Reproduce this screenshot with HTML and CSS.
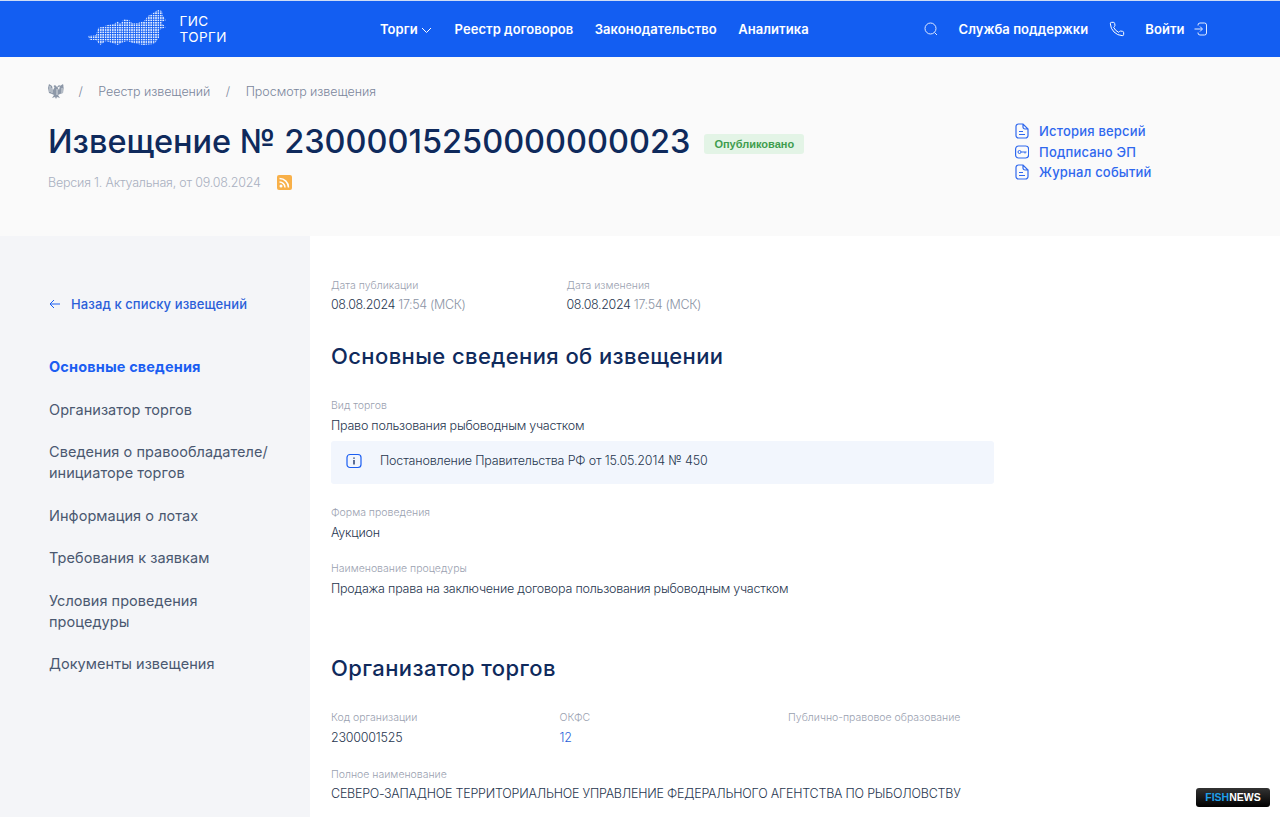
FILE: index.html
```html
<!DOCTYPE html>
<html lang="ru">
<head>
<meta charset="utf-8">
<title>Извещение</title>
<link rel="stylesheet" href="styles.css">
</head>
<body>
<header class="topbar">
  <div class="logo">
    <svg class="logo-map" width="78" height="38" viewBox="0 0 78 38">
      <defs><pattern id="dots" width="2.4" height="2.4" patternUnits="userSpaceOnUse"><rect width="1.600" height="1.600" fill="#e3ecff"/></pattern></defs>
      <path d="M0 26L8 25L10 18L20 15L26 14L30 11L32 14L36 9L41 10L44 13L50 13L56 11L60 6L70 0L74 1L75 6L78 10L73 13L78 17L71 20L71 28L66 34L55 35L45 33L39 31L33 33L30 35L24 33L18 31L12 35L8 30L2 30Z" fill="url(#dots)"/>
    </svg>
    <span class="logo-text">ГИС<br>ТОРГИ</span>
  </div>
  <nav class="mainnav">
    <a class="nav-first">Торги <svg width="11" height="7" viewBox="0 0 11 7"><path d="M1 1l4.500 4.500L10 1" fill="none" stroke="#fff"/></svg></a>
    <a>Реестр договоров</a><a>Законодательство</a><a>Аналитика</a>
  </nav>
  <div class="tools">
    <svg width="14" height="14" viewBox="0 0 14 14"><circle cx="6.500" cy="6.500" r="5.500" fill="none" stroke="#dfe9ff"/><path d="M10.500 10.500l2.500 2.500" stroke="#dfe9ff"/></svg>
    <a>Служба поддержки</a>
    <svg width="16" height="16" viewBox="0 0 24 24"><path d="M22 17.500v2.500a2 2 0 0 1-2.200 2A19 19 0 0 1 2 4.200 2 2 0 0 1 4 2h2.500a2 2 0 0 1 2 1.700l.4 2.600a2 2 0 0 1-.6 1.800L7 9.500a15 15 0 0 0 7.500 7.500l1.400-1.300a2 2 0 0 1 1.800-.6l2.600.4a2 2 0 0 1 1.700 2z" fill="none" stroke="#fff" stroke-width="1.500"/></svg>
    <a class="login">Войти</a>
    <svg width="13" height="14" viewBox="0 0 13 14"><path d="M4 3.500V3a2 2 0 0 1 2-2h4.500a2 2 0 0 1 2 2v8a2 2 0 0 1-2 2H6a2 2 0 0 1-2-2v-.5M.5 7h7.500M6 4.500L8.500 7 6 9.500" fill="none" stroke="#e3ecff"/></svg>
  </div>
</header>
<section class="head">
  <div class="head-main">
    <div class="crumbs">
      <svg class="eagle" width="18" height="17" viewBox="0 0 18 17"><path d="M9 4L7 2 5.500 3l1 1.500L5 7 4 3 1 1 0 5l1 5 3 1 2 1-2 3 3-1 1 2 1-2 3 1-2-3 2-1 3-1 1-5-1-4-3 2-1 4-1.500-2.500L12.500 3 11 2z" fill="#8d98a8"/><path d="M2 3v6M4 5v5M16 3v6M14 5v5M9 6v6" stroke="#fafafa" stroke-width=".7"/></svg>
      <span>/</span><span>Реестр извещений</span><span>/</span><span>Просмотр извещения</span>
    </div>
    <div class="title-row"><h1>Извещение № 23000015250000000023</h1><span class="badge">Опубликовано</span></div>
    <div class="version"><span>Версия 1. Актуальная, от 09.08.2024</span><svg width="15" height="15" viewBox="0 0 15 15"><rect width="15" height="15" rx="2" fill="#f8b049"/><circle cx="4" cy="11" r="1.500" fill="#fff"/><path d="M2.500 7a5.500 5.500 0 0 1 5.500 5.500M2.500 3.500a9 9 0 0 1 9 9" fill="none" stroke="#fff" stroke-width="1.500"/></svg></div>
  </div>
  <ul class="head-links">
    <li><svg width="14" height="16" viewBox="0 0 14 16"><path d="M1 3.500A2.500 2.500 0 0 1 3.500 1H8l5 5v6.500a2.500 2.500 0 0 1-2.500 2.500h-7A2.500 2.500 0 0 1 1 12.500zM8 1v3a2 2 0 0 0 2 2h3M4 8.500h4M4 11.500h6" fill="none" stroke="#2f68ee" stroke-width="1.200"/></svg>История версий</li>
    <li><svg width="14" height="14" viewBox="0 0 14 14"><rect x=".6" y="1" width="13" height="12" rx="3" fill="none" stroke="#2f68ee" stroke-width="1.200"/><circle cx="4.500" cy="7" r="1.500" fill="none" stroke="#2f68ee"/><path d="M6 7h5.500M10 7v1.500" stroke="#2f68ee"/></svg>Подписано ЭП</li>
    <li><svg width="14" height="16" viewBox="0 0 14 16"><path d="M1 3.500A2.500 2.500 0 0 1 3.500 1H8l5 5v6.500a2.500 2.500 0 0 1-2.500 2.500h-7A2.500 2.500 0 0 1 1 12.500zM8 1v3a2 2 0 0 0 2 2h3M4 8.500h4M4 11.500h6" fill="none" stroke="#2f68ee" stroke-width="1.200"/></svg>Журнал событий</li>
  </ul>
</section>
<div class="body">
  <aside class="side">
    <a class="back"><svg width="12" height="10" viewBox="0 0 12 10"><path d="M11 5H1M5 1L1 5l4 4" fill="none" stroke="#1b5ef2"/></svg>Назад к списку извещений</a>
    <ul class="sidenav">
      <li class="on">Основные сведения</li><li>Организатор торгов</li><li>Сведения о правообладателе/ инициаторе торгов</li><li>Информация о лотах</li><li>Требования к заявкам</li><li>Условия проведения процедуры</li><li>Документы извещения</li>
    </ul>
  </aside>
  <main class="content">
    <div class="row dates">
      <div class="f"><label>Дата публикации</label><p>08.08.2024 <i>17:54 (МСК)</i></p></div>
      <div class="f"><label>Дата изменения</label><p>08.08.2024 <i>17:54 (МСК)</i></p></div>
    </div>
    <h2>Основные сведения об извещении</h2>
    <div class="f"><label>Вид торгов</label><p>Право пользования рыбоводным участком</p></div>
    <div class="note"><svg width="16" height="16" viewBox="0 0 16 16"><rect x="1" y="1.500" width="14" height="13" rx="3" fill="none" stroke="#1b5ef2" stroke-width="1.200"/><path d="M8 7v4.500M8 4.500v1.300" stroke="#10295c" stroke-width="1.300"/></svg>Постановление Правительства РФ от 15.05.2014 № 450</div>
    <div class="f g1"><label>Форма проведения</label><p>Аукцион</p></div>
    <div class="f g2"><label>Наименование процедуры</label><p>Продажа права на заключение договора пользования рыбоводным участком</p></div>
    <h2 class="h-org">Организатор торгов</h2>
    <div class="row org">
      <div class="f"><label>Код организации</label><p>2300001525</p></div>
      <div class="f"><label>ОКФС</label><p class="link">12</p></div>
      <div class="f"><label>Публично-правовое образование</label></div>
    </div>
    <div class="f g3"><label>Полное наименование</label><p>СЕВЕРО-ЗАПАДНОЕ ТЕРРИТОРИАЛЬНОЕ УПРАВЛЕНИЕ ФЕДЕРАЛЬНОГО АГЕНТСТВА ПО РЫБОЛОВСТВУ</p></div>
  </main>
</div>
<div class="fishnews"><b>FISH</b>NEWS</div>
</body>
</html>
```
FILE: styles.css
```css
html,body{margin:0;padding:0}
body{width:1280px;height:817px;overflow:hidden;position:relative;font-family:Inter,"Open Sans",sans-serif;color:#0f2a5c;background:#fff}
.topbar{height:57px;box-sizing:border-box;border-top:1px solid #cfdcf5;background:#135ef2;display:flex;align-items:center;color:#fff;font-weight:600;font-size:13px;letter-spacing:.05px}
.logo{display:flex;align-items:center;margin-left:88px;width:292px;gap:13.500px}
.logo-text{font-size:13.500px;line-height:16px;font-weight:400;letter-spacing:.4px}
.mainnav{display:flex;gap:21.500px;width:544px;white-space:nowrap}
.nav-first{margin-right:1px}
.tools{display:flex;align-items:center;gap:20.500px}
.login{margin-right:-11px}
.head{height:179px;background:#fafafa;display:flex;box-sizing:border-box;padding:24px 0 0 48px}
.head-main{width:967px}
.crumbs{display:flex;gap:15.500px;color:#7a869c;font-size:12.500px;font-weight:300;letter-spacing:-.05px;height:20px;align-items:center}
.eagle{margin-right:-3px}
.title-row{display:flex;align-items:center;gap:14px;margin-top:19px}
h1{margin:0;font-size:32.500px;font-weight:500;line-height:44px;color:#0f2a5c;white-space:nowrap}
.badge{background:#e3f4e6;color:#3f9d4f;font-size:11px;font-weight:700;padding:4px 10px;border-radius:3px;margin-top:3px;font-family:"Liberation Sans",sans-serif}
.version{display:flex;align-items:center;gap:16px;margin-top:11px;color:#a9b0c0;font-size:12.500px;font-weight:300;letter-spacing:-.2px}
.head-links{list-style:none;margin:40px 0 0;padding:0;color:#2f68ee;font-size:13px;font-weight:500;letter-spacing:.2px}
.head-links li{display:flex;align-items:center;gap:10px;height:20.500px}
.body{display:flex}
.side{width:310px;height:581px;background:#f4f5f8;box-sizing:border-box;padding:58px 0 0 49px}
.back{display:flex;align-items:center;gap:10px;color:#2b5fd9;font-size:13px;font-weight:500;letter-spacing:.1px;height:20px}
.sidenav{list-style:none;margin:42px 0 0;padding:0;color:#4a5870;font-size:14.500px;font-weight:400;letter-spacing:.05px}
.sidenav li{line-height:21px;margin-bottom:21.500px;width:228px}
.sidenav .on{color:#1b5ef2;font-weight:700;letter-spacing:.15px}
.content{padding:41px 0 0 21px;width:700px}
.f label{display:block;font-size:10.500px;font-weight:300;color:#9aa1b0;line-height:18px}
.f p{margin:2px 0 0;font-size:12.500px;font-weight:300;letter-spacing:-.22px;line-height:18px;color:#27364f;white-space:nowrap}
.f p i{font-style:normal;color:#8b94a5}
.f .link{color:#2b5fd9}
.row{display:flex}
.dates .f{width:235.500px}
.dates .f p{letter-spacing:-.35px;margin-top:1px}
.org .f{width:228.500px}
h2{margin:27px 0 26px;font-size:22px;letter-spacing:.4px;line-height:30px;font-weight:500;color:#0f2a5c}
.note{width:663px;height:43px;margin-top:6px;background:#f2f6fd;border-radius:3px;display:flex;align-items:center;gap:18px;padding:0 0 4px 15px;box-sizing:border-box;font-size:12.500px;font-weight:300;letter-spacing:-.16px;color:#27364f}
.g1{margin-top:20px}
.g2{margin-top:18px}
.g3{margin-top:19px}
.g3 p{margin-top:1px}
.h-org{margin:55px 0 26px}
.fishnews{position:absolute;right:10px;bottom:10px;width:74px;height:19px;background:linear-gradient(#333,#000);border-radius:3px;color:#fff;font:700 10.500px/19px "Liberation Sans",sans-serif;text-align:center}
.fishnews b{color:#1e9fe8}
```
